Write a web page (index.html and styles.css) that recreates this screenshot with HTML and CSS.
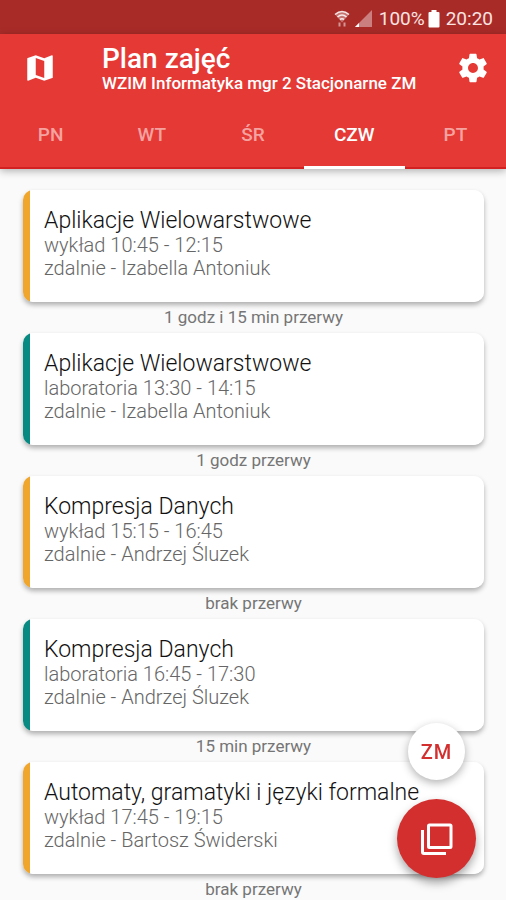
FILE: index.html
```html
<!DOCTYPE html>
<html lang="pl">
<head>
<meta charset="utf-8">
<meta name="viewport" content="width=device-width, initial-scale=1">
<title>Plan zajęć</title>
<link rel="stylesheet" href="styles.css">
</head>
<body>
<div class="status">
  <svg class="status-wifi" viewBox="0 0 16 18" aria-hidden="true"><path d="M1 4.500Q8-1.500 15 4.500L8 12.500z" fill="#fff" fill-opacity=".35"/><path d="M1 4.500Q8-1.500 15 4.500M3.500 7Q8 3 12.500 7M6 9.500Q8 8 10 9.500" fill="none" stroke="#fff" stroke-opacity=".85" stroke-width="1.600"/><path d="M5.500 12.500v4M10.500 12.500v4" stroke="#fff" stroke-opacity=".5" stroke-width="2"/></svg>
  <svg class="status-signal" viewBox="0 0 18 18" aria-hidden="true"><path d="M17 0v17H0z" fill="#fff" fill-opacity=".4"/><path d="M4 13v4H0z" fill="#fff"/></svg>
  <span>100%</span>
  <svg class="status-battery" viewBox="0 0 12 18" aria-hidden="true"><path d="M3.500 0h5v2H10.500Q11.500 2 11.500 3V16.500Q11.500 17.500 10.500 17.500H1.500Q.5 17.500 .5 16.500V3Q.5 2 1.500 2h2z" fill="#fff"/></svg>
  <span>20:20</span>
</div>
<header class="header">
  <div class="bar">
    <button class="icon-button" type="button" aria-label="Mapa"><svg viewBox="0 0 24 24"><path fill="currentColor" d="M20.500 3l-.16.030L15 5.100 9 3 3.360 4.900c-.21.070-.36.250-.36.480V20.500c0 .28.220.5.500.5l.16-.030L9 18.900l6 2.100 5.640-1.900c.21-.070.360-.25.360-.48V3.500c0-.28-.22-.5-.5-.5zM15 19l-6-2.110V5l6 2.110V19z"/></svg></button>
    <div class="titles">
      <h1>Plan zajęć</h1>
      <p>WZIM Informatyka mgr 2 Stacjonarne ZM</p>
    </div>
    <button class="icon-button" type="button" aria-label="Ustawienia"><svg viewBox="0 0 24 24"><path fill="currentColor" d="M19.430 12.980c.040-.32.070-.64.070-.98s-.030-.66-.070-.98l2.110-1.650c.19-.15.240-.42.120-.64l-2-3.460c-.12-.22-.39-.3-.61-.22l-2.490 1c-.52-.4-1.080-.73-1.690-.98l-.38-2.650C14.460 2.180 14.250 2 14 2h-4c-.25 0-.46.180-.49.420l-.38 2.650c-.61.250-1.170.590-1.690.98l-2.490-1c-.23-.090-.49 0-.61.220l-2 3.460c-.13.220-.070.490.120.640l2.110 1.650c-.040.320-.070.650-.070.980s.030.660.070.980l-2.110 1.650c-.19.150-.24.420-.12.640l2 3.460c.12.220.390.300.610.220l2.490-1c.52.400 1.080.730 1.690.980l.38 2.650c.030.240.240.420.490.420h4c.25 0 .46-.18.490-.42l.38-2.650c.61-.25 1.170-.59 1.690-.98l2.490 1c.23.090.490 0 .61-.22l2-3.460c.12-.22.070-.49-.12-.64l-2.110-1.650zM12 15.500c-1.930 0-3.500-1.570-3.500-3.500s1.570-3.500 3.500-3.500 3.500 1.570 3.500 3.500-1.570 3.500-3.500 3.500z"/></svg></button>
  </div>
  <nav class="tabs">
    <a href="#pn">PN</a>
    <a href="#wt">WT</a>
    <a href="#sr">ŚR</a>
    <a href="#czw" class="active" aria-current="page">CZW</a>
    <a href="#pt">PT</a>
  </nav>
</header>
<main class="list">
  <article class="card lecture"><h2>Aplikacje Wielowarstwowe</h2><p>wykład 10:45 - 12:15</p><p>zdalnie - Izabella Antoniuk</p></article>
  <p class="break">1 godz i 15 min przerwy</p>
  <article class="card lab"><h2>Aplikacje Wielowarstwowe</h2><p>laboratoria 13:30 - 14:15</p><p>zdalnie - Izabella Antoniuk</p></article>
  <p class="break">1 godz przerwy</p>
  <article class="card lecture"><h2>Kompresja Danych</h2><p>wykład 15:15 - 16:45</p><p>zdalnie - Andrzej Śluzek</p></article>
  <p class="break">brak przerwy</p>
  <article class="card lab"><h2>Kompresja Danych</h2><p>laboratoria 16:45 - 17:30</p><p>zdalnie - Andrzej Śluzek</p></article>
  <p class="break">15 min przerwy</p>
  <article class="card lecture"><h2>Automaty, gramatyki i języki formalne</h2><p>wykład 17:45 - 19:15</p><p>zdalnie - Bartosz Świderski</p></article>
  <p class="break">brak przerwy</p>
</main>
<div class="actions">
  <button class="fab-small" type="button">ZM</button>
  <button class="fab" type="button" aria-label="Grupy"><svg viewBox="0 0 32 32" fill="none" stroke="currentColor" stroke-width="3" stroke-linejoin="round"><rect x="7.500" y="2" width="22.500" height="22.500" rx="1"/><path d="M1.500 7v22q0 1.500 1.500 1.500h22"/></svg></button>
</div>
</body>
</html>
```
FILE: styles.css
```css
* {
  box-sizing: border-box;
  margin: 0;
  padding: 0;
}

body {
  display: flex;
  flex-direction: column;
  height: 100vh;
  overflow: hidden;
  background: #fafafa;
  color: #1c1c1c;
  font-family: Roboto, "Liberation Sans", sans-serif;
}

button {
  border: 0;
  background: none;
  font: inherit;
  cursor: pointer;
}

svg {
  display: block;
}

.status {
  display: flex;
  flex: none;
  align-items: center;
  justify-content: flex-end;
  gap: 3px;
  height: 34px;
  padding: 3px 13px 0 0;
  background: #a92b28;
  color: #fbe4e2;
  font-size: 19px;
  line-height: 24px;
}

.status-wifi {
  width: 16px;
  height: 18px;
}

.status-signal {
  width: 18px;
  height: 18px;
  margin: 0 3px 0 2px;
}

.status-battery {
  width: 12px;
  height: 18px;
  margin-right: 3px;
}

.header {
  position: relative;
  flex: none;
  background: #e53935;
  color: #fff;
  box-shadow: 0 2px 8px rgba(0, 0, 0, 0.3);
}

.bar {
  display: flex;
  align-items: center;
  height: 68px;
  padding: 0 16px 0 23px;
}

.icon-button {
  flex: none;
  color: #fff;
}

.icon-button svg {
  width: 34px;
  height: 34px;
}

.titles {
  flex: 1;
  min-width: 0;
  padding: 2px 0 0 45px;
}

.titles h1 {
  font-size: 28px;
  font-weight: 500;
  line-height: 28px;
}

.titles p {
  font-size: 17px;
  font-weight: 500;
  line-height: 20px;
  white-space: nowrap;
}

.tabs {
  display: flex;
  height: 67px;
  border-bottom: 2px solid #d32020;
}

.tabs a {
  flex: 1;
  height: 67px;
  border-bottom: 3px solid transparent;
  color: #f5a3a0;
  font-size: 19px;
  font-weight: 500;
  line-height: 66px;
  text-align: center;
  text-decoration: none;
}

.tabs .active {
  border-bottom-color: #fff;
  color: #fff;
}

.list {
  flex: 1;
  min-height: 0;
  overflow: hidden;
  padding: 21px 22px 0 23px;
}

.card {
  height: 112px;
  padding: 18px 14px 0 21px;
  border-radius: 10px;
  box-shadow: 0 3px 5px rgba(0, 0, 0, 0.3);
}

.lecture {
  background: linear-gradient(to right, #f0a52d 7px, #fff 7px);
}

.lab {
  background: linear-gradient(to right, #088a82 7px, #fff 7px);
}

.card h2 {
  color: #111;
  font-size: 23px;
  font-weight: 300;
  line-height: 26px;
}

.card p {
  color: #666;
  font-size: 20px;
  font-weight: 300;
  line-height: 23px;
}

.break {
  color: #757575;
  font-size: 17px;
  line-height: 31px;
  text-align: center;
}

.actions {
  position: fixed;
  right: 30px;
  bottom: 22px;
  display: flex;
  flex-direction: column;
  align-items: center;
  gap: 19px;
}

.fab-small {
  width: 57px;
  height: 57px;
  border-radius: 50%;
  background: #fff;
  color: #d32f2f;
  box-shadow: 0 3px 8px rgba(0, 0, 0, 0.3);
  font-size: 20px;
  font-weight: 500;
  letter-spacing: 1px;
}

.fab {
  display: flex;
  align-items: center;
  justify-content: center;
  width: 79px;
  height: 79px;
  border-radius: 50%;
  background: #d32f2f;
  color: #fff;
  box-shadow: 0 5px 10px rgba(0, 0, 0, 0.35);
}

.fab svg {
  width: 32px;
  height: 32px;
}
```
